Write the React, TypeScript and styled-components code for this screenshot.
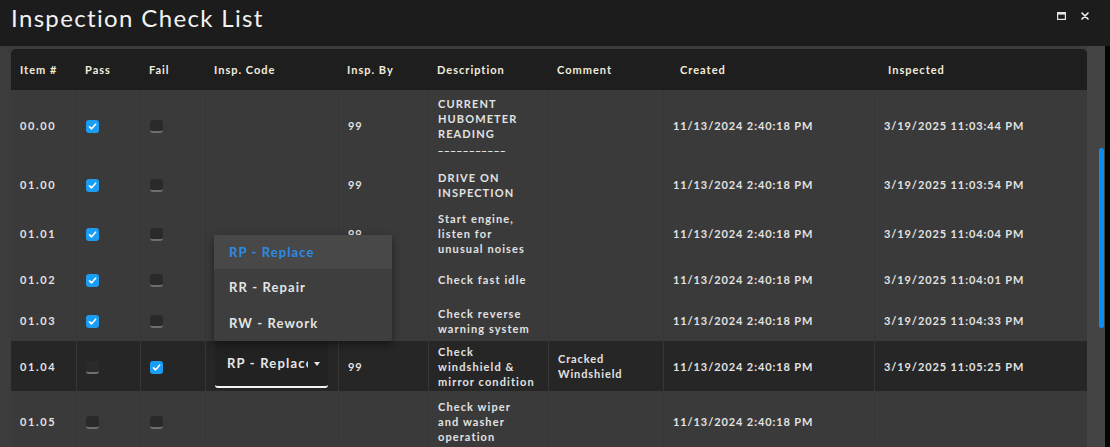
import React from 'react';
import styled, { createGlobalStyle } from 'styled-components';

interface CheckRow {
  item: string;
  pass: boolean;
  fail: boolean;
  code?: string;
  by: string;
  desc: string[];
  comment: string[];
  created: string;
  inspected: string;
  height: number;
  active?: boolean;
}

const rows: CheckRow[] = [
  {
    item: '00.00',
    pass: true,
    fail: false,
    by: '99',
    desc: ['CURRENT', 'HUBOMETER', 'READING', '___________'],
    comment: [],
    created: '11/13/2024 2:40:18 PM',
    inspected: '3/19/2025 11:03:44 PM',
    height: 71,
  },
  {
    item: '01.00',
    pass: true,
    fail: false,
    by: '99',
    desc: ['DRIVE ON', 'INSPECTION'],
    comment: [],
    created: '11/13/2024 2:40:18 PM',
    inspected: '3/19/2025 11:03:54 PM',
    height: 47,
  },
  {
    item: '01.01',
    pass: true,
    fail: false,
    by: '99',
    desc: ['Start engine,', 'listen for', 'unusual noises'],
    comment: [],
    created: '11/13/2024 2:40:18 PM',
    inspected: '3/19/2025 11:04:04 PM',
    height: 50,
  },
  {
    item: '01.02',
    pass: true,
    fail: false,
    by: '99',
    desc: ['Check fast idle'],
    comment: [],
    created: '11/13/2024 2:40:18 PM',
    inspected: '3/19/2025 11:04:01 PM',
    height: 42,
  },
  {
    item: '01.03',
    pass: true,
    fail: false,
    by: '99',
    desc: ['Check reverse', 'warning system'],
    comment: [],
    created: '11/13/2024 2:40:18 PM',
    inspected: '3/19/2025 11:04:33 PM',
    height: 41,
  },
  {
    item: '01.04',
    pass: false,
    fail: true,
    code: 'RP - Replace',
    by: '99',
    desc: ['Check', 'windshield &', 'mirror condition'],
    comment: ['Cracked', 'Windshield'],
    created: '11/13/2024 2:40:18 PM',
    inspected: '3/19/2025 11:05:25 PM',
    height: 50,
    active: true,
  },
  {
    item: '01.05',
    pass: false,
    fail: false,
    by: '',
    desc: ['Check wiper', 'and washer', 'operation'],
    comment: [],
    created: '11/13/2024 2:40:18 PM',
    inspected: '',
    height: 60,
  },
];

const codeOptions = ['RP - Replace', 'RR - Repair', 'RW - Rework'];

const GlobalStyle = createGlobalStyle`
  html, body {
    margin: 0;
    padding: 0;
    background: #3c3c3c;
    overflow: hidden;
  }
  body {
    font-family: Lato, "Open Sans", sans-serif;
  }
`;

const Window = styled.div`
  width: 1110px;
  height: 447px;
  display: flex;
  flex-direction: column;
  overflow: hidden;
`;

const TitleBar = styled.div`
  height: 46px;
  flex-shrink: 0;
  background: #1c1c1c;
  display: flex;
  align-items: center;
  padding: 0 21px 0 11px;
  box-sizing: border-box;
`;

const Title = styled.h1`
  margin: 0;
  flex: 1;
  font-size: 24px;
  font-weight: 400;
  letter-spacing: 1.35px;
  color: #f2f2f2;
  line-height: 30px;
  margin-top: -11px;
`;

const WinButtons = styled.div`
  display: flex;
  gap: 15px;
  align-items: center;
  margin-top: -14px;
`;

const Body = styled.div`
  flex: 1;
  display: flex;
  min-height: 0;
`;

const TableArea = styled.div`
  flex: 1;
  padding: 3px 0 0 11px;
  position: relative;
  overflow: hidden;
`;

const ScrollTrack = styled.div`
  width: 18px;
  background: #444444;
  position: relative;
  flex-shrink: 0;
`;

const ScrollThumb = styled.div`
  position: absolute;
  left: 12px;
  top: 102px;
  width: 5px;
  height: 180px;
  border-radius: 3px;
  background: #0a8ef2;
`;

const Edge = styled.div`
  width: 5px;
  background: #050505;
  flex-shrink: 0;
`;

const Table = styled.table`
  width: 1076px;
  table-layout: fixed;
  border-collapse: separate;
  border-spacing: 0;
`;

const HeadCell = styled.th<{ $pad?: number }>`
  background: #1e1e1e;
  height: 41px;
  padding: 0 0 0 ${(p) => p.$pad ?? 9}px;
  text-align: left;
  font-size: 11px;
  font-weight: 700;
  letter-spacing: 1px;
  color: #f1ecdc;
  white-space: nowrap;
  &:first-child {
    border-top-left-radius: 5px;
  }
  &:last-child {
    border-top-right-radius: 5px;
  }
`;

const Row = styled.tr<{ $active?: boolean }>`
  background: ${(p) => (p.$active ? '#262626' : '#3a3a3a')};
`;

const Cell = styled.td<{ $flush?: boolean; $spacing?: number }>`
  padding: ${(p) => (p.$flush ? '0 10px 0 9px' : '0 4px 0 9px')};
  vertical-align: ${(p) => (p.$flush ? 'top' : 'middle')};
  font-size: 11px;
  font-weight: 700;
  letter-spacing: ${(p) => p.$spacing ?? 0.9}px;
  line-height: 15px;
  color: #e2e2e2;
  border-left: 1px solid #363636;
  white-space: nowrap;
  overflow: visible;
  &:first-child {
    border-left: none;
  }
`;

const Line = styled.div<{ $rule?: boolean }>`
  white-space: nowrap;
  position: relative;
  top: ${(p) => (p.$rule ? -3 : 0)}px;
`;

const Box = styled.span<{ $checked: boolean }>`
  display: inline-flex;
  align-items: center;
  justify-content: center;
  width: 13px;
  height: 13px;
  box-sizing: border-box;
  border-radius: 3px;
  vertical-align: middle;
  background: ${(p) => (p.$checked ? '#1a9df5' : '#2a2a2a')};
  border-bottom: ${(p) => (p.$checked ? 'none' : '2px solid #6e6e6e')};
`;

const SelectBox = styled.div`
  height: 47px;
  background: #222222;
  border-bottom: 2px solid #f4f4f4;
  border-radius: 0 0 3px 3px;
  box-sizing: border-box;
  display: flex;
  align-items: center;
  padding: 0 8px 0 12px;
  gap: 6px;
`;

const SelectText = styled.span`
  flex: 1;
  overflow: hidden;
  font-size: 13px;
  letter-spacing: 1.2px;
  color: #e6e6e6;
  white-space: nowrap;
`;

const Caret = styled.span`
  width: 0;
  height: 0;
  border-left: 3px solid transparent;
  border-right: 3px solid transparent;
  border-top: 4px solid #e6e6e6;
`;

const Menu = styled.ul`
  position: absolute;
  left: 214px;
  top: 189px;
  width: 178px;
  margin: 0;
  padding: 0;
  list-style: none;
  background: #3e3e3e;
  border-radius: 2px;
  box-shadow: 0 3px 8px rgba(0, 0, 0, 0.45);
  z-index: 5;
`;

const MenuItem = styled.li<{ $selected?: boolean }>`
  height: 36px;
  display: flex;
  align-items: center;
  padding-left: 15px;
  font-size: 13px;
  font-weight: 700;
  letter-spacing: 1.1px;
  color: ${(p) => (p.$selected ? '#2e8ae6' : '#e4e4e4')};
  background: ${(p) => (p.$selected ? '#484848' : 'transparent')};
  &:first-child {
    height: 34px;
  }
`;

const colWidths = [65, 64, 65, 133, 90, 120, 115, 211, 213];
const headers: { label: string; pad?: number }[] = [
  { label: 'Item #' },
  { label: 'Pass' },
  { label: 'Fail' },
  { label: 'Insp. Code' },
  { label: 'Insp. By' },
  { label: 'Description' },
  { label: 'Comment' },
  { label: 'Created', pad: 17 },
  { label: 'Inspected', pad: 14 },
];

const Check: React.FC<{ checked: boolean }> = ({ checked }) => (
  <Box $checked={checked}>
    {checked && (
      <svg width="9" height="9" viewBox="0 0 9 9">
        <polyline points="1.5,4.8 3.6,6.8 7.6,2.2" fill="none" stroke="#fff" strokeWidth="1.6" strokeLinecap="round" strokeLinejoin="round" />
      </svg>
    )}
  </Box>
);

export default function App() {
  return (
    <>
      <GlobalStyle />
      <Window>
        <TitleBar>
          <Title>Inspection Check List</Title>
          <WinButtons>
            <svg width="9" height="8" viewBox="0 0 9 8">
              <rect x="0.6" y="0.6" width="7.8" height="6.8" fill="none" stroke="#e4e4e4" strokeWidth="1.2" />
              <rect x="0.6" y="0.6" width="7.8" height="2" fill="#e4e4e4" />
            </svg>
            <svg width="8" height="8" viewBox="0 0 8 8">
              <path d="M1 1 L7 7 M7 1 L1 7" stroke="#f0f0f0" strokeWidth="1.6" strokeLinecap="round" />
            </svg>
          </WinButtons>
        </TitleBar>
        <Body>
          <TableArea>
            <Table>
              <colgroup>
                {colWidths.map((w, i) => (
                  <col key={i} style={{ width: w }} />
                ))}
              </colgroup>
              <thead>
                <tr>
                  {headers.map((h) => (
                    <HeadCell key={h.label} $pad={h.pad}>
                      {h.label}
                    </HeadCell>
                  ))}
                </tr>
              </thead>
              <tbody>
                {rows.map((r) => (
                  <Row key={r.item} $active={r.active} style={{ height: r.height }}>
                    <Cell $spacing={1.6}>{r.item}</Cell>
                    <Cell>
                      <Check checked={r.pass} />
                    </Cell>
                    <Cell>
                      <Check checked={r.fail} />
                    </Cell>
                    {r.code ? (
                      <Cell $flush>
                        <SelectBox>
                          <SelectText>{r.code}</SelectText>
                          <Caret />
                        </SelectBox>
                      </Cell>
                    ) : (
                      <Cell />
                    )}
                    <Cell>{r.by}</Cell>
                    <Cell $spacing={1.1}>
                      {r.desc.map((l, i) => (
                        <Line key={i} $rule={l.startsWith('_')}>
                          {l}
                        </Line>
                      ))}
                    </Cell>
                    <Cell>
                      {r.comment.map((l, i) => (
                        <Line key={i}>{l}</Line>
                      ))}
                    </Cell>
                    <Cell>{r.created}</Cell>
                    <Cell>{r.inspected}</Cell>
                  </Row>
                ))}
              </tbody>
            </Table>
            <Menu>
              {codeOptions.map((o, i) => (
                <MenuItem key={o} $selected={i === 0}>
                  {o}
                </MenuItem>
              ))}
            </Menu>
          </TableArea>
          <ScrollTrack>
            <ScrollThumb />
          </ScrollTrack>
          <Edge />
        </Body>
      </Window>
    </>
  );
}
